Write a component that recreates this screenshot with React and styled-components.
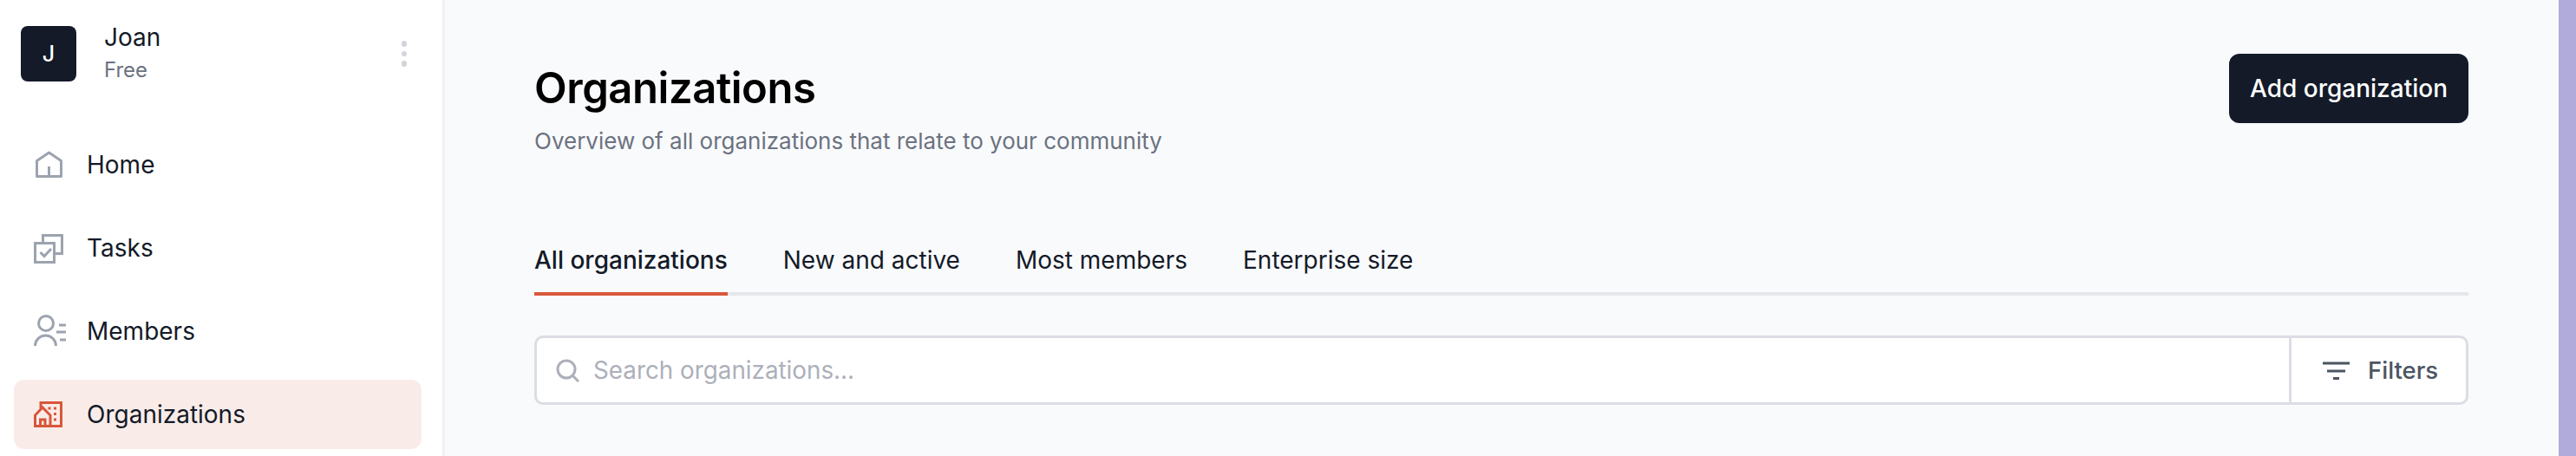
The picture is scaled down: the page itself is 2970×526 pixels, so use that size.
import styled, { createGlobalStyle } from "styled-components";

const GlobalStyle = createGlobalStyle`
  html, body {
    margin: 0;
    padding: 0;
    height: 526px;
    overflow: hidden;
    font-family: "Inter", "Liberation Sans", sans-serif;
  }
  * {
    box-sizing: border-box;
  }
`

const Page = styled.div`
  display: flex;
  width: 2970px;
  height: 526px;
  overflow: hidden;
  background-color: #f9fafc;
`

const Sidebar = styled.aside`
  flex: 0 0 513px;
  padding: 30px 24px 0 16px;
  background-color: white;
  border-right: 3px solid #f0f1f4;
`

const Profile = styled.div`
  display: flex;
  align-items: center;
  height: 64px;
  padding-left: 8px;
  margin-bottom: 56px;
`

const Avatar = styled.div`
  display: flex;
  align-items: center;
  justify-content: center;
  width: 64px;
  height: 64px;
  border-radius: 8px;
  background-color: #141a28;
  color: white;
  font-size: 25px;
  font-weight: 500;
`

const ProfileText = styled.div`
  flex: 1;
  margin-left: 32px;
`

const ProfileName = styled.div`
  font-size: 28px;
  line-height: 38px;
  color: #141a28;
`

const ProfilePlan = styled.div`
  font-size: 24px;
  line-height: 38px;
  color: #6b7280;
`

const MoreButton = styled.div`
  display: flex;
  flex-direction: column;
  gap: 5px;
  margin-right: 17px;
  span {
    width: 6.5px;
    height: 6.5px;
    border-radius: 50%;
    background-color: #d1d5db;
  }
`

const NavList = styled.nav`
  display: flex;
  flex-direction: column;
  gap: 16px;
`

const NavItem = styled.div`
  display: flex;
  align-items: center;
  gap: 24px;
  height: 80px;
  padding-left: 22px;
  border-radius: 12px;
  background-color: ${(props) => (props.$active ? "#f9ece8" : "transparent")};
  color: #141a28;
  font-size: 28px;
`

const NavIcon = styled.svg`
  flex: 0 0 38px;
  width: 38px;
  height: 38px;
  fill: none;
  stroke: ${(props) => (props.$active ? "#d9573a" : "#9ca3af")};
  stroke-width: 3;
`

const Main = styled.main`
  flex: 1;
  padding: 62px 104px 0 103px;
`

const Header = styled.div`
  display: flex;
  justify-content: space-between;
  align-items: flex-start;
  margin-bottom: 99px;
`

const HeaderText = styled.div`
  padding-top: 10px;
`

const Title = styled.h1`
  margin: 0 0 14px;
  font-size: 49px;
  line-height: 59px;
  font-weight: 600;
  letter-spacing: -0.45px;
  color: black;
`

const Subtitle = styled.p`
  margin: 0;
  font-size: 26px;
  line-height: 35px;
  color: #6b7280;
`

const AddButton = styled.button`
  width: 276px;
  height: 80px;
  padding: 0;
  border: none;
  border-radius: 12px;
  background-color: #141a28;
  color: white;
  font-family: inherit;
  font-size: 28px;
  font-weight: 500;
`

const Tabs = styled.div`
  display: flex;
  gap: 64px;
  border-bottom: 4px solid #e5e7eb;
  margin-bottom: 46px;
`

const Tab = styled.div`
  margin-bottom: -4px;
  padding-bottom: 16px;
  border-bottom: 4px solid ${(props) => (props.$active ? "#d9573a" : "transparent")};
  color: #141a28;
  font-size: 28px;
  line-height: 42px;
  font-weight: ${(props) => (props.$active ? 500 : 400)};
`

const SearchBar = styled.div`
  display: flex;
  height: 80px;
  border: 3px solid #dcdde4;
  border-radius: 10px;
  background-color: white;
`

const SearchField = styled.div`
  flex: 1;
  display: flex;
  align-items: center;
  gap: 16px;
  padding-left: 22px;
  color: #adb0ba;
  font-size: 27.8px;
`

const SearchIcon = styled.svg`
  width: 27px;
  height: 27px;
  fill: none;
  stroke: #adb0ba;
  stroke-width: 3;
`

const FilterButton = styled.div`
  display: flex;
  align-items: center;
  gap: 21px;
  width: 204px;
  padding-left: 36px;
  border-left: 3px solid #dcdde4;
  color: #4b5563;
  font-size: 27.5px;
  font-weight: 500;
`

const FilterIcon = styled.svg`
  width: 31px;
  height: 21px;
  stroke: #4b5563;
  stroke-width: 3;
`

const Strip = styled.div`
  flex: 0 0 20px;
  background-color: #b1abdb;
`

const navItems = [
  {
    label: "Home",
    icon: (
      <>
        <path d="M4.5 32.5 V14.5 L18.5 5 L32.5 14.5 V32.5 Z" strokeLinejoin="round" />
        <path d="M18.5 32.5 V21" />
      </>
    ),
  },
  {
    label: "Tasks",
    icon: (
      <>
        <rect x="2.5" y="13.5" width="22" height="22" />
        <path d="M11.5 12 V4.5 H33.5 V25.5 H26" />
        <path d="M8.5 24 L13 28.5 L21 20" />
      </>
    ),
  },
  {
    label: "Members",
    icon: (
      <>
        <circle cx="15" cy="10" r="8.5" />
        <path d="M2.5 36 A12 12 0 0 1 26.5 36" />
        <path d="M30 12 H38 M27 20 H38 M31 29 H38" />
      </>
    ),
  },
  {
    label: "Organizations",
    active: true,
    icon: (
      <>
        <path d="M9 12 V5.5 H32.5 V32.5 H2.5 V20 L11 11 L20 20 V32.5" />
        <path d="M8.5 32.5 V25 H14 V32.5" />
        <path d="M17.5 12 H20.5 M24 12 H27 M24 18.5 H27 M24 25 H27" />
      </>
    ),
  },
];

const tabs = ["All organizations", "New and active", "Most members", "Enterprise size"];

export default function App() {
  return (
    <Page>
      <GlobalStyle />
      <Sidebar>
        <Profile>
          <Avatar>J</Avatar>
          <ProfileText>
            <ProfileName>Joan</ProfileName>
            <ProfilePlan>Free</ProfilePlan>
          </ProfileText>
          <MoreButton>
            <span />
            <span />
            <span />
          </MoreButton>
        </Profile>
        <NavList>
          {navItems.map((item) => (
            <NavItem key={item.label} $active={item.active}>
              <NavIcon viewBox="0 0 38 38" $active={item.active}>
                {item.icon}
              </NavIcon>
              {item.label}
            </NavItem>
          ))}
        </NavList>
      </Sidebar>
      <Main>
        <Header>
          <HeaderText>
            <Title>Organizations</Title>
            <Subtitle>Overview of all organizations that relate to your community</Subtitle>
          </HeaderText>
          <AddButton>Add organization</AddButton>
        </Header>
        <Tabs>
          {tabs.map((tab, index) => (
            <Tab key={tab} $active={index === 0}>
              {tab}
            </Tab>
          ))}
        </Tabs>
        <SearchBar>
          <SearchField>
            <SearchIcon viewBox="0 0 27 27">
              <circle cx="12" cy="12" r="10" />
              <path d="M19 19 L26 26" />
            </SearchIcon>
            Search organizations...
          </SearchField>
          <FilterButton>
            <FilterIcon viewBox="0 0 31 21">
              <path d="M0 2 H31 M5 11 H26 M12 19.5 H19" />
            </FilterIcon>
            Filters
          </FilterButton>
        </SearchBar>
      </Main>
      <Strip />
    </Page>
  );
}
